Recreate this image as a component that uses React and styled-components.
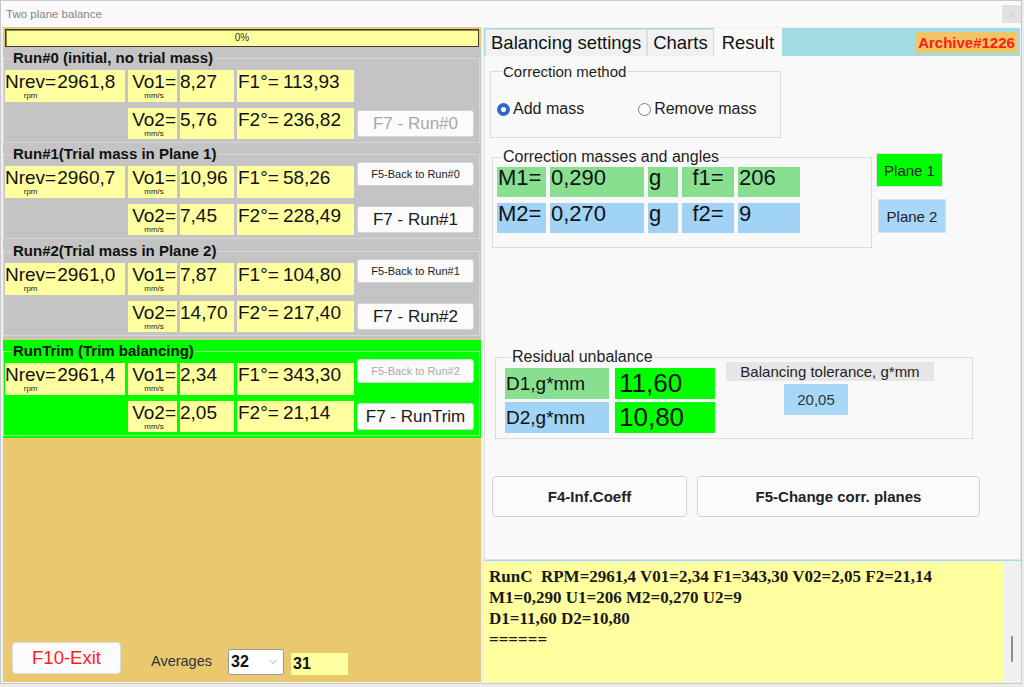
import React from 'react'
import styled, { createGlobalStyle } from 'styled-components'
import { ChevronDown, X } from 'lucide-react'

const GlobalStyle = createGlobalStyle`
  html, body {
    margin: 0;
    padding: 0;
    background: #ececec;
  }
  body {
    font-family: "Liberation Sans", Arial, sans-serif;
    color: #111;
  }
  * {
    box-sizing: border-box;
  }
`

const GRAY = '#c4c4c4'
const GREEN = '#00ff00'
const YELLOW = '#ffffa0'
const SOFT_GREEN = '#88df90'
const SOFT_BLUE = '#a0d3f6'

const Window = styled.div`
  width: 1022px;
  height: 684px;
  background: #f0f0f0;
  border: 1px solid #c9c9c9;
  display: flex;
  flex-direction: column;
  overflow: hidden;
`

const TitleBar = styled.div`
  height: 26px;
  flex: none;
  display: flex;
  align-items: center;
  justify-content: space-between;
  padding-left: 5px;
  background: #fafafa;
  font-size: 11.5px;
  color: #858585;
`

const CloseBox = styled.div`
  width: 19px;
  height: 18px;
  background: #e2e2e2;
  display: flex;
  align-items: center;
  justify-content: center;
  color: #c4c4c4;
`

const Body = styled.div`
  flex: 1;
  display: flex;
  gap: 2px;
  padding: 0 0 1px 2px;
  min-height: 0;
`

/* ---------- left side ---------- */

const LeftPanel = styled.div`
  width: 478px;
  flex: none;
  display: flex;
  flex-direction: column;
  background: #e9c870;
`

const Progress = styled.div`
  height: 18px;
  margin: 2px 2px 0 2px;
  background: #ffff9c;
  border: 1px solid #3c3c3c;
  box-shadow: inset 1px 1px 0 #8a8a50;
  font-size: 10px;
  line-height: 16px;
  text-align: center;
  color: #333;
`

const Section = styled.div`
  background: ${p => p.$bg};
  padding: 0 1px ${p => p.$pad}px 0;
  margin-top: ${p => p.$gap || 0}px;
`

const Group = styled.fieldset`
  margin: 0;
  padding: 0 4px 3px 1px;
  border: 1px solid ${p => p.$line};
  min-width: 0;
`

const Title = styled.legend`
  margin-left: 7px;
  padding: 0 1px;
  font-size: 15px;
  font-weight: bold;
  line-height: 22px;
  color: #111;
`

const RunGrid = styled.div`
  display: grid;
  grid-template-columns: 120px 49px 54px 117px 117px;
  grid-template-rows: 32px 31px;
  column-gap: 3px;
  row-gap: 6px;
  margin-top: 1px;
`

const Cell = styled.div`
  background: ${YELLOW};
  display: flex;
  align-items: flex-start;
  justify-content: ${p => (p.$right ? 'flex-end' : 'flex-start')};
  gap: ${p => p.$gap || 0}px;
  padding: 2px ${p => (p.$right ? 1 : 0)}px 0 ${p => p.$inset || 0}px;
  font-size: 19px;
  line-height: 19px;
  color: #111;
  white-space: nowrap;
`

const Label = styled.span`
  display: inline-flex;
  flex-direction: column;
  align-items: center;
`

const Unit = styled.small`
  font-size: 8px;
  line-height: 9px;
  color: #222;
`

const RunButton = styled.button`
  align-self: ${p => (p.$small ? 'start' : 'center')};
  height: ${p => (p.$small ? 24 : 27)}px;
  margin-top: ${p => (p.$small ? -4 : 0)}px;
  padding: 0;
  background: #fbfbfb;
  border: 1px solid #d6d6d6;
  border-radius: 3px;
  font-family: "Liberation Sans", Arial, sans-serif;
  font-size: ${p => (p.$small ? 11 : 17)}px;
  color: ${p => (p.disabled ? '#a9a9a9' : '#1a1a1a')};
`

const Filler = styled.div`
  flex: 1;
  display: flex;
  align-items: flex-end;
  padding: 0 0 8px 9px;
`

const ExitButton = styled.button`
  width: 109px;
  height: 32px;
  background: #fbfbfb;
  border: 1px solid #dcdcdc;
  border-radius: 4px;
  font-family: "Liberation Sans", Arial, sans-serif;
  font-size: 18.5px;
  color: #ff1e1e;
`

const AvgLabel = styled.span`
  margin: 0 16px 4px 30px;
  font-size: 14.5px;
  line-height: 17px;
  color: #333;
`

const Dropdown = styled.div`
  width: 56px;
  height: 26px;
  margin-bottom: -1px;
  background: #fff;
  border: 1px solid #9a9a9a;
  border-radius: 2px;
  display: flex;
  align-items: center;
  justify-content: space-between;
  padding: 0 4px 0 2px;
  font-size: 16px;
  font-weight: bold;
  color: #111;
`

const CountBox = styled.div`
  width: 57px;
  height: 22px;
  margin: 0 0 -1px 7px;
  background: ${YELLOW};
  padding: 2px 0 0 2px;
  font-size: 16px;
  font-weight: bold;
  color: #111;
`

/* ---------- right side ---------- */

const RightPanel = styled.div`
  flex: 1;
  display: flex;
  flex-direction: column;
  padding-left: 1px;
  min-width: 0;
`

const TabStrip = styled.div`
  height: 28px;
  margin: 1px 1px 0 0;
  flex: none;
  display: flex;
  align-items: flex-end;
  background: #a2dbe3;
  border-left: 1px solid #a2dbe3;
`

const Tab = styled.div`
  height: ${p => (p.$active ? 28 : 27)}px;
  padding: 0 ${p => (p.$active ? 7 : 5)}px;
  display: flex;
  align-items: center;
  background: ${p => (p.$active ? '#f9f9f9' : '#f1f1f1')};
  border: 1px solid ${p => (p.$active ? '#f9f9f9' : '#dcdcdc')};
  border-bottom: none;
  font-size: 18.5px;
  color: #111;
`

const Badge = styled.div`
  margin: 0 3px 0 auto;
  align-self: center;
  width: 101px;
  height: 21px;
  background: #efc566;
  color: #ff1a1a;
  font-size: 15px;
  font-weight: bold;
  line-height: 21px;
  text-align: center;
`

const TabContent = styled.div`
  flex: 1;
  display: flex;
  flex-direction: column;
  align-items: flex-start;
  padding: 0 0 0 5px;
  background: #f9f9f9;
  border: 1px solid #e2e2e2;
  border-top: none;
  min-height: 0;
`

const GroupBox = styled.fieldset`
  margin: ${p => p.$mt}px 0 0 ${p => p.$ml || 0}px;
  width: ${p => p.$w}px;
  padding: ${p => p.$pad};
  border: 1px solid #dcdcdc;
  min-width: 0;
`

const GroupTitle = styled.legend`
  margin-left: ${p => p.$indent || 5}px;
  padding: 0 1px;
  font-size: ${p => p.$size || 16}px;
  line-height: ${p => (p.$size || 16) + 2}px;
  color: #1e1e1e;
`

const RadioRow = styled.div`
  display: flex;
  align-items: center;
  gap: 54px;
  height: 18px;
`

const RadioItem = styled.label`
  display: flex;
  align-items: center;
  gap: 3px;
  font-size: 16px;
  color: #1e1e1e;
`

const RadioDot = styled.span`
  width: 13px;
  height: 13px;
  border-radius: 50%;
  background: #fff;
  border: ${p => (p.$on ? '4px solid #2a6cc4' : '1px solid #7c7c7c')};
`

const MassesRow = styled.div`
  display: flex;
  align-items: flex-start;
`

const MassGrid = styled.div`
  display: grid;
  grid-template-columns: 49px 94px 30px 52px 62px;
  grid-auto-rows: 30px;
  column-gap: 4px;
  row-gap: 6px;
`

const MassCell = styled.div`
  background: ${p => p.$bg};
  padding-left: ${p => (p.$center ? 0 : 1)}px;
  text-align: ${p => (p.$center ? 'center' : 'left')};
  font-size: 22px;
  line-height: 22px;
  color: #111;
`

const PlaneColumn = styled.div`
  display: flex;
  flex-direction: column;
  align-items: flex-start;
  gap: 12px;
  margin: 15px 0 0 4px;
`

const PlaneButton = styled.div`
  width: ${p => p.$w}px;
  height: 34px;
  margin-left: ${p => p.$shift || 0}px;
  background: ${p => p.$bg};
  border: 1px solid #dedede;
  display: flex;
  align-items: center;
  justify-content: center;
  font-size: 15px;
  color: #222;
`

const ResidualRow = styled.div`
  display: flex;
  align-items: flex-start;
`

const ResidualGrid = styled.div`
  display: grid;
  grid-template-columns: 104px 100px;
  grid-auto-rows: 31px;
  column-gap: 6px;
  row-gap: 3px;
`

const ResidualCell = styled.div`
  background: ${p => p.$bg};
  display: flex;
  align-items: center;
  padding-left: ${p => (p.$big ? 4 : 1)}px;
  font-size: ${p => (p.$big ? 26 : 19)}px;
  color: #111;
`

const Tolerance = styled.div`
  display: flex;
  flex-direction: column;
  align-items: flex-start;
  margin: -6px 0 0 11px;
`

const ToleranceLabel = styled.div`
  width: 208px;
  height: 19px;
  background: #e6e6e6;
  text-align: center;
  font-size: 15px;
  line-height: 19px;
  color: #222;
`

const ToleranceValue = styled.div`
  width: 64px;
  height: 31px;
  margin: 3px 0 0 58px;
  background: #a8d8f8;
  display: flex;
  align-items: center;
  justify-content: center;
  font-size: 15px;
  color: #333;
`

const ActionRow = styled.div`
  display: flex;
  gap: 10px;
  margin: 37px 0 0 2px;
`

const ActionButton = styled.button`
  width: ${p => p.$w}px;
  height: 41px;
  background: #fbfbfb;
  border: 1px solid #d3d3d3;
  border-radius: 4px;
  font-family: "Liberation Sans", Arial, sans-serif;
  font-size: 15px;
  font-weight: bold;
  color: #222;
`

const Divider = styled.div`
  height: 1px;
  margin-bottom: 1px;
  flex: none;
  background: #a8dbe4;
`

const LogArea = styled.div`
  height: 120px;
  flex: none;
  display: flex;
`

const LogText = styled.div`
  flex: 1;
  background: #ffff9f;
  padding: 4px 5px;
  font-family: "Liberation Serif", "Times New Roman", serif;
  font-size: 17px;
  font-weight: bold;
  line-height: 21px;
  color: #1a1a1a;
  white-space: pre;
`

const Scrollbar = styled.div`
  width: 18px;
  background: #f0f0f0;
  padding: 74px 0 0 8px;
`

const Thumb = styled.div`
  width: 2px;
  height: 26px;
  border-radius: 1px;
  background: #8a8a8a;
`

const runs = [
  {
    title: 'Run#0 (initial, no trial mass)',
    bg: GRAY, line: '#d6d6d6', pad: 0,
    nrev: '2961,8', vo1: '8,27', f1: '113,93', vo2: '5,76', f2: '236,82',
    run: 'F7 - Run#0', runOff: true,
  },
  {
    title: 'Run#1(Trial mass in Plane 1)',
    bg: GRAY, line: '#d6d6d6', pad: 1,
    nrev: '2960,7', vo1: '10,96', f1: '58,26', vo2: '7,45', f2: '228,49',
    back: 'F5-Back to Run#0', run: 'F7 - Run#1',
  },
  {
    title: 'Run#2(Trial mass in Plane 2)',
    bg: GRAY, line: '#d6d6d6', pad: 3,
    nrev: '2961,0', vo1: '7,87', f1: '104,80', vo2: '14,70', f2: '217,40',
    back: 'F5-Back to Run#1', run: 'F7 - Run#2',
  },
  {
    title: 'RunTrim (Trim balancing)',
    bg: GREEN, line: '#7cff7c', pad: 2, gap: 1,
    nrev: '2961,4', vo1: '2,34', f1: '343,30', vo2: '2,05', f2: '21,14',
    back: 'F5-Back to Run#2', backOff: true, run: 'F7 - RunTrim',
  },
]

const RunBlock = ({ item }) => (
  <Section $bg={item.bg} $pad={item.pad} $gap={item.gap}>
    <Group $line={item.line}>
      <Title>{item.title}</Title>
      <RunGrid>
        <Cell $gap={1}>
          <Label>Nrev=<Unit>rpm</Unit></Label>
          <span>{item.nrev}</span>
        </Cell>
        <Cell $right>
          <Label>Vo1=<Unit>mm/s</Unit></Label>
        </Cell>
        <Cell>{item.vo1}</Cell>
        <Cell $inset={1} $gap={4}>
          <span>F1°=</span>
          <span>{item.f1}</span>
        </Cell>
        {item.back
          ? <RunButton $small disabled={item.backOff}>{item.back}</RunButton>
          : <span />}

        <span />
        <Cell $right>
          <Label>Vo2=<Unit>mm/s</Unit></Label>
        </Cell>
        <Cell>{item.vo2}</Cell>
        <Cell $inset={1} $gap={4}>
          <span>F2°=</span>
          <span>{item.f2}</span>
        </Cell>
        <RunButton disabled={item.runOff}>{item.run}</RunButton>
      </RunGrid>
    </Group>
  </Section>
)

const masses = [
  { bg: SOFT_GREEN, m: 'M1=', value: '0,290', f: 'f1=', angle: '206' },
  { bg: SOFT_BLUE, m: 'M2=', value: '0,270', f: 'f2=', angle: '9' },
]

const log = [
  'RunC  RPM=2961,4 V01=2,34 F1=343,30 V02=2,05 F2=21,14',
  'M1=0,290 U1=206 M2=0,270 U2=9',
  'D1=11,60 D2=10,80',
  '======',
].join('\n')

const App = () => {
  return (
    <>
      <GlobalStyle />
      <Window>
        <TitleBar>
          <span>Two plane balance</span>
          <CloseBox><X size={11} strokeWidth={1.5} /></CloseBox>
        </TitleBar>
        <Body>
          <LeftPanel>
            <Progress>0%</Progress>
            {runs.map(item => <RunBlock key={item.title} item={item} />)}
            <Filler>
              <ExitButton>F10-Exit</ExitButton>
              <AvgLabel>Averages</AvgLabel>
              <Dropdown>
                <span>32</span>
                <ChevronDown size={12} strokeWidth={1.5} color="#8a8a8a" />
              </Dropdown>
              <CountBox>31</CountBox>
            </Filler>
          </LeftPanel>

          <RightPanel>
            <TabStrip>
              <Tab>Balancing settings</Tab>
              <Tab>Charts</Tab>
              <Tab $active>Result</Tab>
              <Badge>Archive#1226</Badge>
            </TabStrip>
            <TabContent>
              <GroupBox $mt={7} $w={291} $pad="20px 6px 19px 6px">
                <GroupTitle $size={15} $indent={5}>Correction method</GroupTitle>
                <RadioRow>
                  <RadioItem><RadioDot $on />Add mass</RadioItem>
                  <RadioItem><RadioDot />Remove mass</RadioItem>
                </RadioRow>
              </GroupBox>

              <MassesRow>
                <GroupBox $mt={10} $ml={2} $w={380} $pad="1px 4px 14px 4px">
                  <GroupTitle $indent={5}>Correction masses and angles</GroupTitle>
                  <MassGrid>
                    {masses.map(row => (
                      <React.Fragment key={row.m}>
                        <MassCell $bg={row.bg}>{row.m}</MassCell>
                        <MassCell $bg={row.bg}>{row.value}</MassCell>
                        <MassCell $bg={row.bg}>g</MassCell>
                        <MassCell $bg={row.bg} $center>{row.f}</MassCell>
                        <MassCell $bg={row.bg}>{row.angle}</MassCell>
                      </React.Fragment>
                    ))}
                  </MassGrid>
                </GroupBox>
                <PlaneColumn>
                  <PlaneButton $bg={GREEN} $w={67}>Plane 1</PlaneButton>
                  <PlaneButton $bg="#a8d8f8" $w={68} $shift={2}>Plane 2</PlaneButton>
                </PlaneColumn>
              </MassesRow>

              <GroupBox $mt={100} $ml={5} $w={478} $pad="2px 8px 5px 9px">
                <GroupTitle $indent={6}>Residual unbalance</GroupTitle>
                <ResidualRow>
                  <ResidualGrid>
                    <ResidualCell $bg={SOFT_GREEN}>D1,g*mm</ResidualCell>
                    <ResidualCell $bg={GREEN} $big>11,60</ResidualCell>
                    <ResidualCell $bg={SOFT_BLUE}>D2,g*mm</ResidualCell>
                    <ResidualCell $bg={GREEN} $big>10,80</ResidualCell>
                  </ResidualGrid>
                  <Tolerance>
                    <ToleranceLabel>Balancing tolerance, g*mm</ToleranceLabel>
                    <ToleranceValue>20,05</ToleranceValue>
                  </Tolerance>
                </ResidualRow>
              </GroupBox>

              <ActionRow>
                <ActionButton $w={195}>F4-Inf.Coeff</ActionButton>
                <ActionButton $w={283}>F5-Change corr. planes</ActionButton>
              </ActionRow>
            </TabContent>
            <Divider />
            <LogArea>
              <LogText>{log}</LogText>
              <Scrollbar><Thumb /></Scrollbar>
            </LogArea>
          </RightPanel>
        </Body>
      </Window>
    </>
  )
}

export default App
